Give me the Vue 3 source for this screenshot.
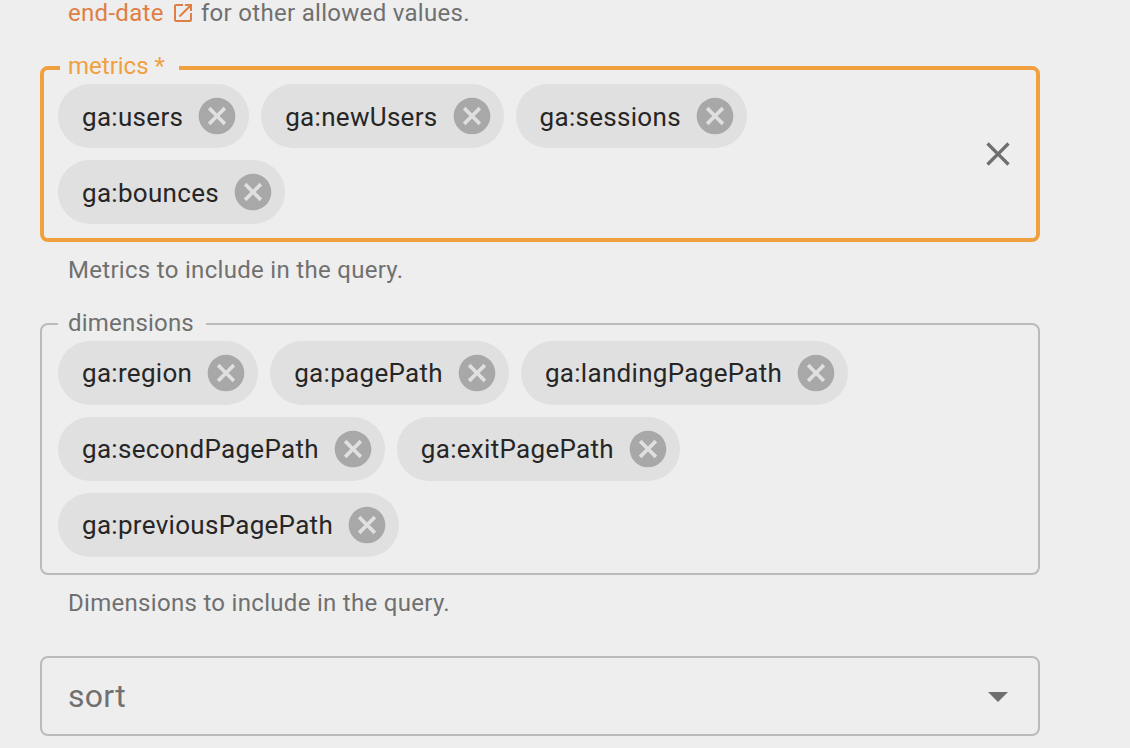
<script setup>
const metrics = [['ga:users', 'ga:newUsers', 'ga:sessions'], ['ga:bounces']]
const dimensions = [
  ['ga:region', 'ga:pagePath', 'ga:landingPagePath'],
  ['ga:secondPagePath', 'ga:exitPagePath'],
  ['ga:previousPagePath'],
]
const cancel = 'M12 2C6.47 2 2 6.47 2 12s4.47 10 10 10 10-4.47 10-10S17.53 2 12 2zm5 13.59L15.59 17 12 13.41 8.41 17 7 15.59 10.59 12 7 8.41 8.41 7 12 10.59 15.59 7 17 8.41 13.41 12 17 15.59z'
</script>

<template>
  <main class="page">
    <p class="helper intro">
      <a class="link">end-date<svg class="ext" viewBox="0 0 24 24"><path d="M19 19H5V5h7V3H5c-1.11 0-2 .9-2 2v14c0 1.1.89 2 2 2h14c1.1 0 2-.9 2-2v-7h-2v7zM14 3v2h3.59l-9.83 9.83 1.41 1.41L19 6.41V10h2V3h-7z" /></svg></a>
      for other allowed values.
    </p>

    <div class="box focused">
      <span class="legend legend-focused">metrics *</span>
      <div class="chips">
        <div v-for="(row, i) in metrics" :key="i" class="row">
          <span v-for="c in row" :key="c" class="chip">
            <span class="chip-label">{{ c }}</span>
            <svg class="del" viewBox="0 0 24 24"><path :d="cancel" /></svg>
          </span>
        </div>
      </div>
      <svg class="clear" viewBox="0 0 24 24"><path d="M19 6.41L17.59 5 12 10.59 6.41 5 5 6.41 10.59 12 5 17.59 6.41 19 12 13.41 17.59 19 19 17.59 13.41 12z" /></svg>
    </div>
    <p class="helper under">Metrics to include in the query.</p>

    <div class="box">
      <span class="legend">dimensions</span>
      <div class="chips">
        <div v-for="(row, i) in dimensions" :key="i" class="row">
          <span v-for="c in row" :key="c" class="chip">
            <span class="chip-label">{{ c }}</span>
            <svg class="del" viewBox="0 0 24 24"><path :d="cancel" /></svg>
          </span>
        </div>
      </div>
    </div>
    <p class="helper under">Dimensions to include in the query.</p>

    <div class="select">
      <span class="select-label">sort</span>
      <svg class="arrow" viewBox="0 0 24 24"><path d="M7 10l5 5 5-5z" /></svg>
    </div>
  </main>
</template>

<style>
html, body { margin: 0; background: #eeeeee; }
</style>

<style scoped>
.page {
  box-sizing: border-box;
  width: 1130px;
  height: 748px;
  overflow: hidden;
  padding-left: 40px;
  background: #eeeeee;
  font-family: Roboto, "Liberation Sans", sans-serif;
}
.helper {
  margin: 0;
  padding-left: 28px;
  font-size: 24px;
  line-height: 40px;
  letter-spacing: 0.3px;
  color: #707070;
}
.intro {
  line-height: 26px;
  margin-bottom: 40px;
}
.under {
  margin-top: 8px;
  margin-bottom: 33px;
}
.link { color: #df7f45; }
.ext {
  width: 24px;
  height: 24px;
  margin-left: 7px;
  vertical-align: -4px;
  fill: #df7f45;
}
.box {
  position: relative;
  box-sizing: border-box;
  width: 1000px;
  display: flex;
  align-items: center;
  padding: 16px;
  border: 2px solid #bbbbbb;
  border-radius: 8px;
}
.focused {
  padding: 14px;
  border: 4px solid #f0a03f;
}
.legend {
  position: absolute;
  left: 16px;
  top: -18px;
  padding: 0 12px 0 10px;
  background: #eeeeee;
  font-size: 24px;
  line-height: 32px;
  letter-spacing: 0.2px;
  color: #707070;
}
.legend-focused {
  left: 16px;
  top: -20px;
  padding: 0 14px 0 8px;
  letter-spacing: 0;
  color: #f0a03f;
}
.chips {
  flex: 1;
  display: flex;
  flex-direction: column;
  gap: 12px;
}
.row {
  display: flex;
  gap: 12px;
}
.chip {
  display: inline-flex;
  align-items: center;
  height: 64px;
  border-radius: 32px;
  background: #e0e0e0;
}
.chip-label {
  padding: 0 12px 0 24px;
  font-size: 26px;
  letter-spacing: 0.3px;
  color: #262626;
  white-space: nowrap;
}
.focused .chip-label {
  padding-top: 1px;
}
.del {
  width: 44px;
  height: 44px;
  margin-right: 10px;
  fill: #a8a8a8;
}
.clear {
  width: 40px;
  height: 40px;
  margin-right: 4px;
  fill: #6f6f6f;
}
.select {
  box-sizing: border-box;
  width: 1000px;
  height: 80px;
  display: flex;
  align-items: center;
  justify-content: space-between;
  padding: 0 16px 0 26px;
  border: 2px solid #bbbbbb;
  border-radius: 8px;
}
.select-label {
  font-size: 32px;
  letter-spacing: 0.3px;
  color: #707070;
}
.arrow {
  width: 48px;
  height: 48px;
  fill: #6f6f6f;
}
</style>
